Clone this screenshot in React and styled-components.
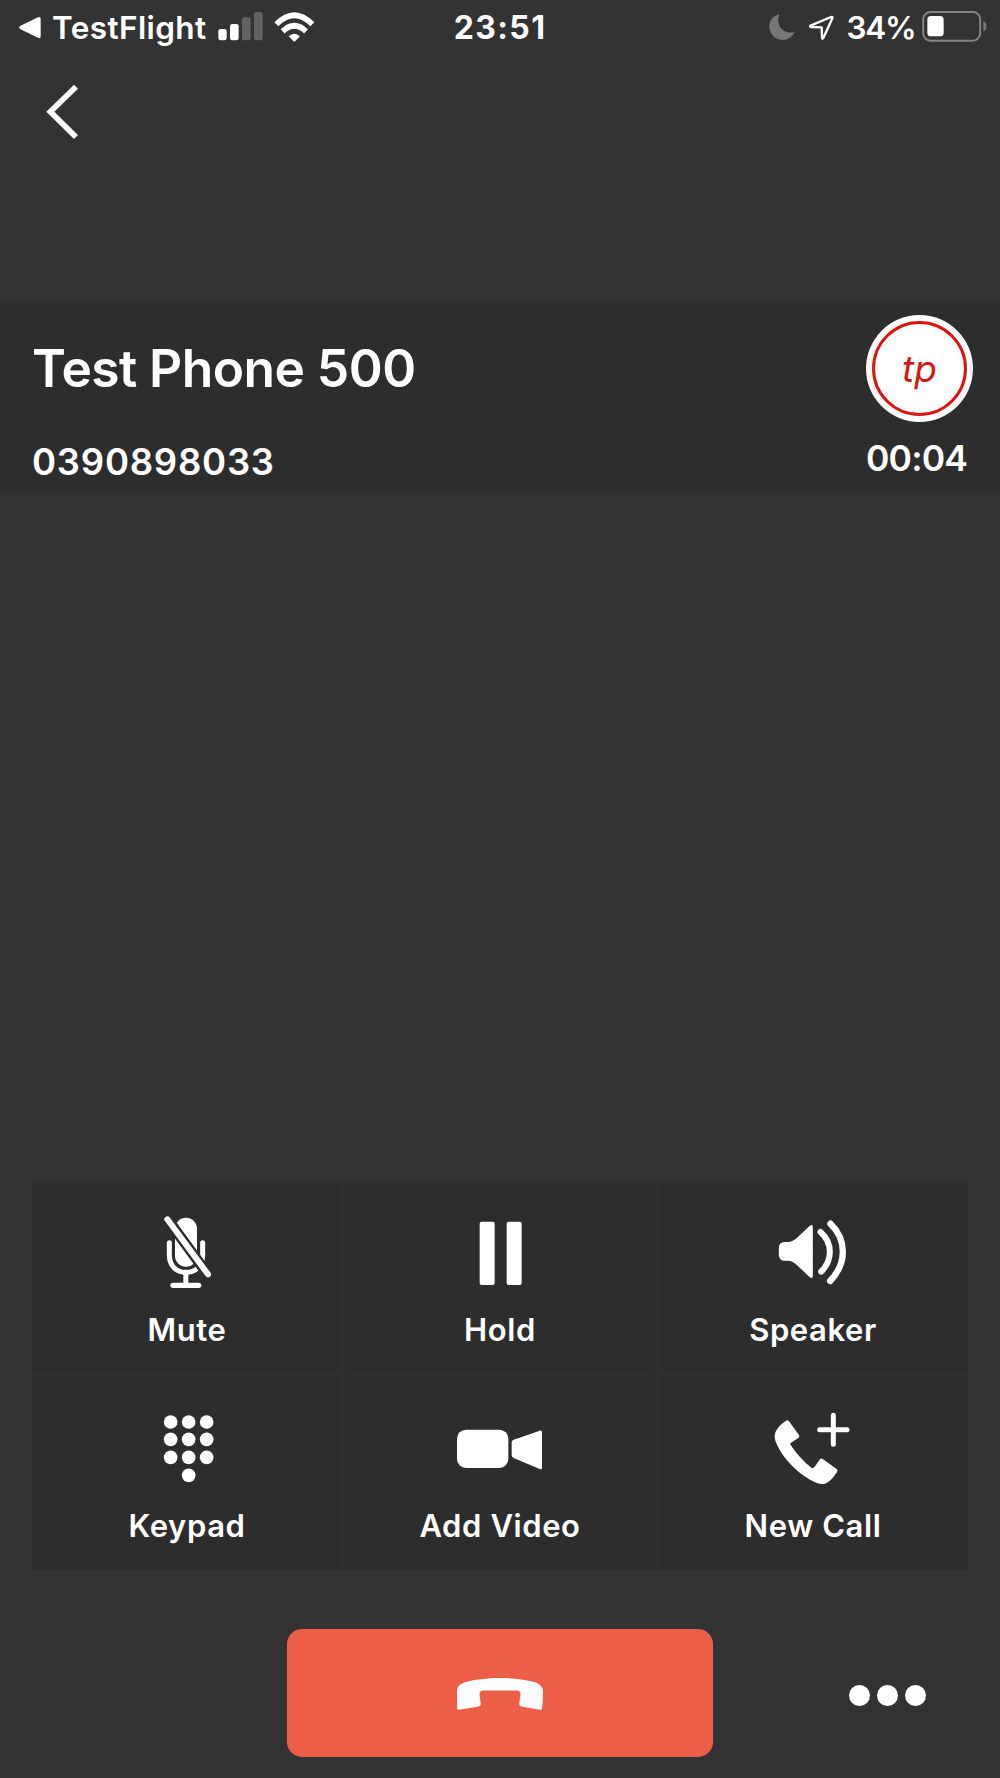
import React from "react";
import styled, { createGlobalStyle } from "styled-components";

const GlobalStyle = createGlobalStyle`
  * { box-sizing: border-box; }
  html, body { margin: 0; padding: 0; background: #333333; }
  body { font-family: Inter, "Liberation Sans", sans-serif; color: #ffffff; }
  button { font: inherit; color: inherit; border: 0; padding: 0; margin: 0; background: none; }
  svg { display: block; flex: none; fill: #ffffff; }
`;

const Screen = styled.main`
  display: flex;
  flex-direction: column;
  width: 1000px;
  height: 1778px;
  overflow: hidden;
  background: #333333;
`;

const Text = styled.span`
  display: block;
  white-space: nowrap;
  font-size: ${(p) => p.$size}px;
  line-height: ${(p) => p.$line}px;
  font-weight: ${(p) => p.$weight || 600};
  letter-spacing: ${(p) => p.$spacing || 0}px;
`;

const StatusBar = styled.header`
  display: grid;
  grid-template-columns: 1fr auto 1fr;
  align-items: center;
  height: 55px;
  padding: 0 15px;
`;

const StatusGroup = styled.div`
  display: flex;
  align-items: center;
  justify-content: ${(p) => (p.$end ? "flex-end" : "flex-start")};
`;

const BackArea = styled.nav`
  display: flex;
  height: 246px;
  padding: 27px 0 0 42px;
`;

const IconButton = styled.button`
  display: flex;
  align-items: center;
  justify-content: center;
  width: ${(p) => p.$width}px;
  height: ${(p) => p.$height}px;
`;

const CallHeader = styled.section`
  display: flex;
  justify-content: space-between;
  height: 192px;
  padding: 14px 27px 0 32px;
  background: #2d2d2d;
`;

const Caller = styled.div`
  display: flex;
  flex-direction: column;
  gap: 40px;
  padding-top: 22px;
`;

const CallMeta = styled.div`
  display: flex;
  flex-direction: column;
  align-items: flex-start;
  gap: 14px;
`;

const Avatar = styled.div`
  display: flex;
  width: 107px;
  height: 107px;
  padding: 6px;
  border-radius: 50%;
  background: #ffffff;
`;

const AvatarRing = styled.div`
  display: flex;
  flex: 1;
  align-items: center;
  justify-content: center;
  border: 3px solid #dc1414;
  border-radius: 50%;
  color: #d31a1a;
  font-style: italic;
`;

const Spacer = styled.div`
  flex: 1;
`;

const Controls = styled.section`
  display: grid;
  grid-template-columns: repeat(3, 1fr);
  grid-template-rows: 193px 194px;
  gap: 2px 3px;
  margin: 0 32px;
  background: #303030;
`;

const Control = styled.button`
  display: flex;
  flex-direction: column;
  align-items: center;
  gap: ${(p) => p.$gap}px;
  padding-top: 24px;
  background: #2d2d2d;
`;

const Footer = styled.footer`
  display: grid;
  grid-template-columns: 1fr 426px 1fr;
  align-items: start;
  height: 208px;
  padding-top: 37px;
`;

const EndCall = styled.button`
  display: flex;
  align-items: center;
  justify-content: center;
  height: 128px;
  margin-top: 22px;
  padding-top: 2px;
  border-radius: 15px;
  background: #ec5e48;
`;

const More = styled.button`
  display: flex;
  gap: 7px;
  margin-top: 78px;
  padding-left: 136px;
`;

const Dot = styled.span`
  width: 21px;
  height: 21px;
  border-radius: 50%;
  background: #ffffff;
`;

const line = { fill: "none", stroke: "#ffffff", strokeLinecap: "round", strokeLinejoin: "round" };

const icons = {
  mute: (
    <svg width="96" height="90" viewBox="358 105 288 270">
      <path d="M466 176a33 33 0 0 1 66 0v81a33 33 0 0 1-66 0z" />
      <path {...line} strokeWidth="15" d="M449 218v38c0 31 20 51 50 51s50-20 50-51v-38" />
      <path {...line} strokeWidth="15" strokeLinecap="butt" d="M498.500 305v40" />
      <path {...line} strokeWidth="16" d="M460 346h77" />
      <path {...line} strokeWidth="32" stroke="#2d2d2d" d="M443 147l122 167" />
      <path {...line} strokeWidth="18" d="M443 148l122 165" />
    </svg>
  ),
  hold: (
    <svg width="96" height="90" viewBox="336 105 288 270">
      <rect x="419" y="155" width="45" height="190" rx="6" />
      <rect x="500" y="155" width="45" height="190" rx="6" />
    </svg>
  ),
  speaker: (
    <svg width="96" height="90" viewBox="343.5 105 288 270">
      <path d="M385 234q0-18 18-18h9q13 0 27-12l38-36q10-8 10 3v146q0 11-10 4l-38-36q-14-13-27-13h-9q-18 0-18-18z" />
      <path {...line} strokeWidth="18" d="M510 186q28 25 28 59t-26 60" />
      <path {...line} strokeWidth="19" d="M540 161q37 36 37 84t-38 88" />
    </svg>
  ),
  keypad: (
    <svg width="96" height="90" viewBox="357 90 288 270">
      {[156, 208, 262].map((y) =>
        [452, 506, 560].map((x) => <circle key={x + "-" + y} cx={x} cy={y} r="20.500" />)
      )}
      <circle cx="506" cy="316" r="20.500" />
    </svg>
  ),
  video: (
    <svg width="96" height="90" viewBox="336 89 288 270">
      <rect x="351" y="178" width="154" height="115" rx="27" />
      <path d="M515 216q0-6 6-8l78-27q7-2 7 5v106q0 7-7 4l-78-33q-6-3-6-9z" />
    </svg>
  ),
  newCall: (
    <svg width="96" height="90" viewBox="345 89 288 270">
      <path d="M407 152q6-5 10 1l30 41q3 5-2 9l-23 15q-2 2 0 6c18 27 38 49 62 68q5 3 9-1l17-24q3-4 8-1l42 30q5 3 1 9c-11 18-23 30-36 35q-10 3-22-1c-57-25-107-75-127-128q-5-16 2-29 8-16 29-30z" />
      <path {...line} strokeWidth="15" d="M509 178h82M550 135v87" />
    </svg>
  ),
};

const controls = [
  ["mute", "Mute", 15],
  ["hold", "Hold", 15],
  ["speaker", "Speaker", 15],
  ["keypad", "Keypad", 16],
  ["video", "Add Video", 16],
  ["newCall", "New Call", 16],
];

const ReturnArrow = styled.svg`
  margin: 0 11px 0 4px;
`;
const Signal = styled.svg`
  margin-left: 11px;
`;
const Wifi = styled.svg`
  margin-left: 10px;
`;
const Moon = styled.svg`
  margin-right: 13px;
`;
const Location = styled.svg`
  margin-right: 11px;
`;
const Battery = styled.svg`
  margin-left: 6px;
  margin-right: -1.5px;
`;

export default function App() {
  return (
    <>
      <GlobalStyle />
      <Screen>
        <StatusBar>
          <StatusGroup>
            <ReturnArrow width="22" height="55" viewBox="57 0 66 165">
              <path d="M60 78L114 52q8-3 8 5v52q0 8-8 4L60 87q-5-4 0-9z" />
            </ReturnArrow>
            <Text $size={31.500} $line={55} $spacing={0.4}>TestFlight</Text>
            <Signal width="46" height="55" viewBox="655 0 138 165">
              <rect x="656" y="87" width="25" height="34" rx="7" />
              <rect x="691" y="72" width="26" height="49" rx="7" />
              <rect x="727" y="52" width="26" height="69" rx="7" fill="#626262" />
              <rect x="763" y="36" width="26" height="85" rx="7" fill="#626262" />
            </Signal>
            <Wifi width="41" height="55" viewBox="821 0 123 165">
              <path {...line} strokeLinecap="butt" strokeWidth="17" d="M828 73q54-54 108 0M847 94q35-33 70 0" />
              <path d="M865 109q17-16 34 0l-14 14q-3 3-6 0z" />
            </Wifi>
          </StatusGroup>
          <Text $size={32} $line={55} $weight={700} $spacing={1.4}>23:51</Text>
          <StatusGroup $end>
            <Moon width="27" height="55" viewBox="57 0 81 165">
              <path fill="#777777" d="M88 43C61 50 52 75 62 97c14 31 58 30 72-1-28 8-60-16-46-53z" />
            </Moon>
            <Location width="26" height="55" viewBox="177 0 78 165">
              <path {...line} strokeWidth="7" d="M182 77l61-26q6-2 4 4l-27 59q-3 5-4-1l-1-31-33-1q-4-2 0-4z" />
            </Location>
            <Text $size={31.500} $line={55} $spacing={-1.2}>34%</Text>
            <Battery width="65" height="55" viewBox="513 0 195 165">
              <rect x="516.500" y="36" width="171" height="86" rx="22" fill="none" stroke="#858585" strokeWidth="6" />
              <rect x="529" y="48" width="49" height="61" rx="11" />
              <path fill="#777777" d="M697 64q9 2 9 15t-9 15z" />
            </Battery>
          </StatusGroup>
        </StatusBar>

        <BackArea>
          <IconButton $width={40} $height={60} aria-label="Back">
            <svg width="40" height="60" viewBox="126 246 120 180">
              <path fill="none" stroke="#ffffff" strokeWidth="17" d="M228 260L151 335l77 76" />
            </svg>
          </IconButton>
        </BackArea>

        <CallHeader>
          <Caller>
            <Text $size={51.500} $line={62} $spacing={-0.55}>Test Phone 500</Text>
            <Text $size={36.500} $line={46} $spacing={0.75}>0390898033</Text>
          </Caller>
          <CallMeta>
            <Avatar>
              <AvatarRing>
                <Text $size={37} $line={40} $weight={400}>tp</Text>
              </AvatarRing>
            </Avatar>
            <Text $size={35.500} $line={46} $spacing={-0.8}>00:04</Text>
          </CallMeta>
        </CallHeader>

        <Spacer />

        <Controls>
          {controls.map(([id, label, gap]) => (
            <Control key={id} $gap={gap}>
              {icons[id]}
              <Text $size={31} $line={40} $spacing={0.6}>{label}</Text>
            </Control>
          ))}
        </Controls>

        <Footer>
          <span />
          <EndCall aria-label="End call">
            <svg width="90" height="40" viewBox="455 1674 90 40">
              <path d="M457 1692c0-5 2-7 7-9.500 20-6 52-6 72 0 5 2.500 7 5 7 9.500q0 9-1 16.500-.3 1.500-2 1.200l-19-3.200q-2-.5-1.700-3l1.200-9q.2-3.500-3-4h-35q-3.200.5-3 4l1.200 9q.3 2.500-1.700 3l-20 3.200q-1.500 0-1.800-1.200z" />
            </svg>
          </EndCall>
          <More aria-label="More">
            <Dot />
            <Dot />
            <Dot />
          </More>
        </Footer>
      </Screen>
    </>
  );
}
